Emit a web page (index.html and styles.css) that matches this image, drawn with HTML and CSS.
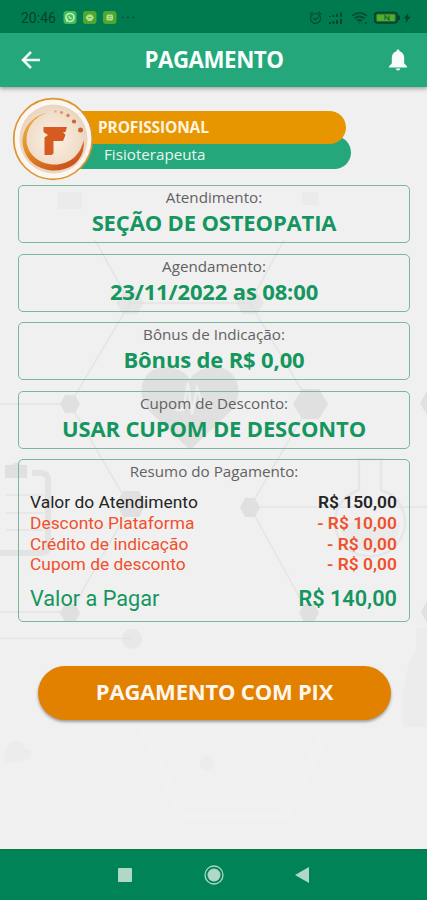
FILE: index.html
```html
<!DOCTYPE html>
<html lang="pt-BR">
<head>
<meta charset="utf-8">
<title>Pagamento</title>
<link rel="stylesheet" href="styles.css">
</head>
<body>
<div class="screen">
  <div class="status">
    <span class="clock">20:46</span>
    <svg class="apps" width="70" height="16" viewBox="0 0 70 16">
      <rect x="0.5" y="1" width="13" height="13" rx="3" fill="#43bd58"/>
      <circle cx="7" cy="7.500" r="4" fill="none" stroke="#c4efbf" stroke-width="1.600"/>
      <path d="M3.500 11.500l1-3M5.500 6.500l3 2.500" stroke="#c4efbf" stroke-width="1.500"/>
      <rect x="20" y="1" width="13.500" height="13" rx="3" fill="#4da832"/>
      <path d="M22.500 7.500l2.500-3h3.500l2.500 3-2.500 3.500h-3.500z" fill="#b4df8e"/>
      <path d="M25 7.500h3.500" stroke="#6bb64a"/>
      <rect x="40" y="1" width="13.500" height="13" rx="3" fill="#4da832"/>
      <rect x="43.500" y="4.500" width="6.500" height="6" rx="1.500" fill="#b4df8e"/>
      <path d="M45 6.500h3.500M45 8.500h3.500" stroke="#6bb64a" stroke-width=".8"/>
      <g fill="#04492f"><circle cx="59.500" cy="7.500" r="1"/><circle cx="65" cy="7.500" r="1"/><circle cx="70.500" cy="7.500" r="1"/></g>
    </svg>
    <svg class="signals" width="104" height="16" viewBox="0 0 104 16">
      <g fill="none" stroke="#084a33" stroke-width="1.200">
        <circle cx="7.500" cy="8.500" r="5"/>
        <path d="M1.500 4.500l3-2.500M10.500 2l3 2.500M5.300 8l2 2 3-3.200"/>
      </g>
      <g stroke="#063e2a" stroke-width="2">
        <path d="M22 7V6M25.500 7V5M29 7V4M33 7V2.500" stroke-width="1.600"/>
        <path d="M22 14v-2M25.500 14v-3M29 14v-4M33 14V9" stroke-width="1.800"/>
      </g>
      <g fill="none" stroke="#084a33" stroke-width="1.700">
        <path d="M44 5.800q7.500-6 15 0M46.500 8.500q5-4 10 0M49 11q2.500-2 5 0M51.500 13.500v-1"/>
        <path d="M58 12v2"/>
      </g>
      <rect x="66.800" y="2.500" width="22.500" height="10.500" rx="3" fill="#1c6a31" stroke="#063e2a" stroke-width="1.500"/>
      <rect x="68.800" y="4.500" width="18" height="6.500" rx="1" fill="#4fb02f"/>
      <path d="M77 10V5.500l4 4.500V5.500" fill="none" stroke="#1d6b2d" stroke-width="1.200"/>
      <path d="M91 5.500v4.500" stroke="#063e2a" stroke-width="1.800"/>
      <path d="M100.500 2.500l-4.500 6h2.500l-1 4.500 5-6.300h-2.700z" fill="#063e2a"/>
    </svg>
  </div>

  <header class="appbar">
    <svg class="back" width="20" height="20" viewBox="0 0 20 20"><path d="M19 10H3M10 2L2 10l8 8" fill="none" stroke="#f1fbf6" stroke-width="2.500"/></svg>
    <h1>PAGAMENTO</h1>
    <svg class="bell" width="20" height="22" viewBox="0 0 20 22"><path d="M10 0.500c-1 0-1.500.7-1.500 1.700C5.300 3 3.800 5.700 3.800 9v5.500L1 17.200v1.400h18v-1.400l-2.800-2.700V9c0-3.300-1.500-6-4.700-6.800 0-1-.5-1.700-1.500-1.700zM7.800 19.500a2.200 2 0 0 0 4.400 0z" fill="#f4fbf8"/></svg>
  </header>

  <main class="content">
    <svg class="backdrop" width="427" height="762" viewBox="0 87 427 762">
      <g fill="none" stroke="#e4e4e4" stroke-width="1.500">
        <path d="M95 240L130 303H250L284 240M130 303L70 404L130 507L70 613M250 303L310 404L250 507L308 613M0 404H70M250 507H427M0 612H70M0 638.500H132"/>
      </g>
      <g fill="#e0e0e0">
        <path d="M123 292h14l7 11-7 11h-14l-7-11zM243 292h14l7 11-7 11h-14l-7-11z" opacity=".6"/>
        <path d="M65 395h10l5 9-5 9H65l-5-9zM302 389h17l9 15-9 15h-17l-9-15zM123 491h16l7 13-7 13h-16l-7-13zM245 498h10l5 9.500-5 9.500h-10l-5-9.500zM65 604h10l5 9-5 9H65l-5-9zM304 604h10l5 9-5 9h-10l-5-9z"/>
        <path d="M190 450L147 409C134 387 146 367 165 367c12 0 20 5 25 12 5-7 13-12 25-12 19 0 31 20 18 42z"/>
        <path d="M427 391l-7 12 7 12zM427 601l-6 11 6 11z"/>
        <circle cx="132" cy="639" r="10" opacity=".5"/>
        <circle cx="207" cy="763" r="7" opacity=".25"/>
        <path d="M4 752l8-11h8l5 8 6 1v8l-13 4H5z" opacity=".25"/>
        <path d="M58 192h24v17H58zM302 192h16v13h-16z" opacity=".3"/>
        <path d="M427 628h-11v22l-7 12-6 30v35h24z" opacity=".18"/>
      </g>
      <path d="M176 410h7l5-27 4 31 5-26 5 15h7" fill="none" stroke="#eee" stroke-width="2.500"/>
      <g fill="none" stroke="#e3e3e3" stroke-width="6">
        <path d="M32 473h9q7 0 7 7v66q0 7-7 7H0"/>
        <path d="M6 495h38M6 513h38M6 530h38" stroke-width="1.500"/>
        <path d="M10 470q6-12 12 0" stroke-width="3"/>
      </g>
      <path d="M5 465h22v13H5z" fill="#e0e0e0"/>
      <g fill="none" stroke="#e6e6e6" stroke-width="2.500">
        <path d="M357 459h26M359 459v31a35 34 0 1 0 22 0v-31"/>
      </g>
      <path d="M340 523h60a30 29 0 0 1-60 0z" fill="#e7e7e7" opacity=".7"/>
      <path d="M142 724l40 92h104l43-92" fill="none" stroke="#f1f1f1" stroke-width="10"/>
    </svg>

    <section class="profile">
      <div class="role">PROFISSIONAL</div>
      <div class="job">Fisioterapeuta</div>
      <svg class="avatar" width="82" height="84" viewBox="0 0 82 84">
        <defs>
          <linearGradient id="ring" x1="0" y1="0" x2=".6" y2="1"><stop offset="0" stop-color="#efb24a"/><stop offset=".5" stop-color="#e39028"/><stop offset="1" stop-color="#cc561c"/></linearGradient>
          <radialGradient id="disc"><stop offset="0" stop-color="#fbefe4"/><stop offset=".72" stop-color="#f1dfcc"/><stop offset="1" stop-color="#ead4bf"/></radialGradient>
        </defs>
        <ellipse cx="41" cy="42" rx="39.300" ry="40.300" fill="#fbf6f1" stroke="#dc9531" stroke-width="1.700"/>
        <ellipse cx="41.500" cy="42" rx="34" ry="34.500" fill="url(#disc)"/>
        <path d="M35 15.500C17 20 7.500 36 11.500 51c7 29 52 30 59.500 3q1.500-6 .5-11C69 58 57 67.500 43 67.500 27 67.500 15.500 57 14.500 44 14 32 21 20.500 35 15.500z" fill="url(#ring)"/>
        <path d="M31.500 30H55l-1.500 5h-2.500l2.500 3-2.500 6H41.500v12.500l-2 1.500H32.500V40.500l3.500-2.500-4.500-3z" fill="#d55b20"/>
        <g fill="#cf6628"><circle cx="68.500" cy="33" r="2.500"/><circle cx="62" cy="24.500" r="2.100"/><circle cx="56" cy="18.500" r="1.700" opacity=".8"/><circle cx="49.500" cy="15.500" r="1.600" opacity=".6"/><circle cx="43.500" cy="14.500" r="1.200" opacity=".4"/></g>
      </svg>
    </section>

    <section class="card"><p class="label">Atendimento:</p><p class="value">SEÇÃO DE OSTEOPATIA</p></section>
    <section class="card"><p class="label">Agendamento:</p><p class="value">23/11/2022 as 08:00</p></section>
    <section class="card"><p class="label">Bônus de Indicação:</p><p class="value">Bônus de R$ 0,00</p></section>
    <section class="card"><p class="label">Cupom de Desconto:</p><p class="value">USAR CUPOM DE DESCONTO</p></section>

    <section class="card summary">
      <p class="label">Resumo do Pagamento:</p>
      <div class="rows">
        <div class="row"><span>Valor do Atendimento</span><b>R$ 150,00</b></div>
        <div class="row minus"><span>Desconto Plataforma</span><b>- R$ 10,00</b></div>
        <div class="row minus"><span>Crédito de indicação</span><b>- R$ 0,00</b></div>
        <div class="row minus"><span>Cupom de desconto</span><b>- R$ 0,00</b></div>
        <div class="row total"><span>Valor a Pagar</span><b>R$ 140,00</b></div>
      </div>
    </section>

    <button class="pay">PAGAMENTO COM PIX</button>
  </main>

  <nav class="navbar">
    <svg width="14" height="14" viewBox="0 0 14 14"><rect width="14" height="14" rx="1" fill="#b0d8c7"/></svg>
    <svg width="20" height="20" viewBox="0 0 20 20"><circle cx="10" cy="10" r="9" fill="none" stroke="#b0d8c7" stroke-width="1.300"/><circle cx="10" cy="10" r="6.500" fill="#b0d8c7"/></svg>
    <svg width="14" height="16" viewBox="0 0 14 16"><path d="M14 0v16L0 8z" fill="#b0d8c7"/></svg>
  </nav>
</div>
</body>
</html>
```
FILE: styles.css
```css
* { box-sizing: border-box; }
body { margin: 0; background: #f0f0f0; font-family: "Open Sans", sans-serif; }
p, h1 { margin: 0; }
svg { display: block; flex: none; }
.screen { width: 427px; height: 900px; display: flex; flex-direction: column; overflow: hidden; }

.status { height: 33px; flex: none; background: #007b50; display: flex; align-items: center; padding: 3px 15px 0 21px; }
.clock { font: 400 14px/16px Roboto, sans-serif; color: #03412b; width: 42px; white-space: nowrap; }
.apps { overflow: visible; }
.signals { margin-left: auto; }

.appbar { height: 54px; flex: none; background: #24a87b; display: flex; align-items: center; justify-content: space-between; padding: 0 19px 0 21px; box-shadow: 0 2px 4px rgba(0, 0, 0, .32); position: relative; z-index: 1; }
.appbar h1 { font-size: 22.300px; font-weight: 700; line-height: 30px; padding-right: 1px; color: #f6fdfa; letter-spacing: -.45px; }

.content { height: 762px; flex: none; position: relative; display: flex; flex-direction: column; padding: 24px 17px 0 18px; }
.backdrop { position: absolute; left: 0; top: 0; }

.profile { position: relative; height: 58px; margin: 0 0 16.400px; flex: none; }
.role { position: relative; z-index: 1; width: 292px; height: 33px; margin-left: 36px; padding-left: 44px; border-radius: 0 17px 17px 0; background: #e89600; color: #fff4e0; font-weight: 700; font-size: 15.500px; letter-spacing: -.15px; line-height: 32px; }
.job { position: relative; width: 297px; height: 33px; margin: -8px 0 0 36px; padding: 8px 0 0 50px; border-radius: 0 17px 17px 0; background: #24a87b; color: #e6f7ef; font-size: 15.200px; line-height: 20px; }
.avatar { position: absolute; z-index: 2; left: -6px; top: -14px; }

.card { position: relative; flex: none; height: 58px; margin-bottom: 10.400px; border: 1.500px solid #79b89f; border-radius: 5px; text-align: center; }
.label { font-size: 15.200px; font-weight: 400; line-height: 20px; margin-top: 1px; color: #626262; white-space: nowrap; }
.value { font-size: 22px; font-weight: 700; line-height: 30px; letter-spacing: -.15px; color: #15965f; white-space: nowrap; }

.summary { height: 163px; margin-bottom: 0; }
.rows { padding: 11.500px 12px 0 11px; font-family: Roboto, sans-serif; text-align: left; }
.row { display: flex; justify-content: space-between; font-size: 17.400px; line-height: 20.600px; color: #242424; }
.row b { font-weight: 600; }
.minus { color: #f0502c; }
.total { margin-top: 10px; font-size: 21.700px; line-height: 28px; color: #15965f; }

.pay { position: relative; flex: none; width: 353px; height: 54px; margin: 43.600px 0 0 20px; padding: 0 0 3px; border: 0; border-radius: 27px; background: #e28000; color: #fff7ee; font: 700 22px/30px "Open Sans", sans-serif; letter-spacing: -.2px; box-shadow: 0 2px 3px rgba(0, 0, 0, .35); }

.navbar { height: 51px; flex: none; background: #008356; border-top: 1px solid #0c7840; display: flex; align-items: center; justify-content: space-between; padding: 0 118px 0 118px; }
```
